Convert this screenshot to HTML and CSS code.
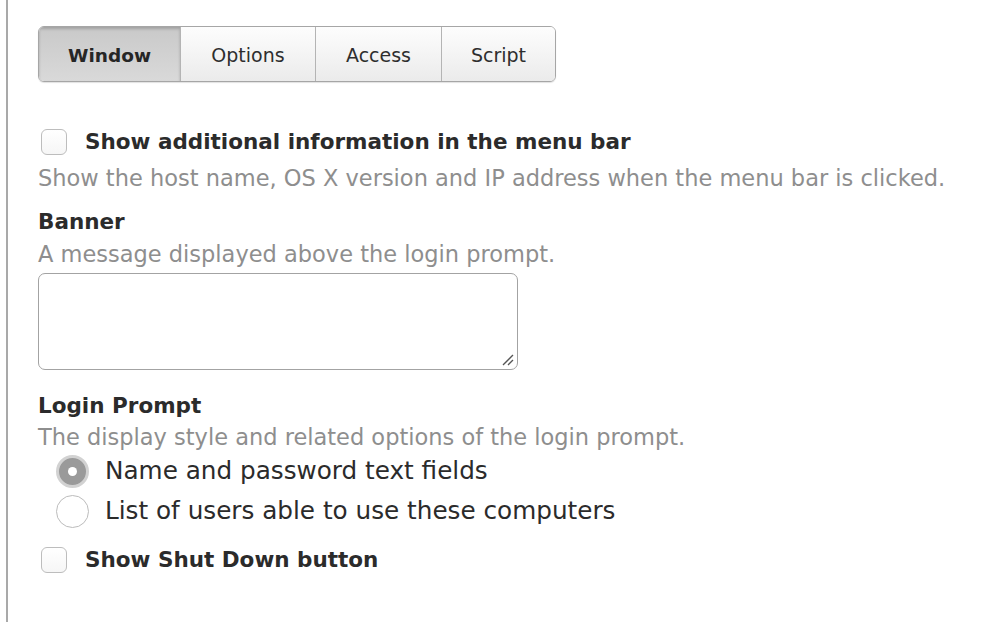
FILE: index.html
```html
<!DOCTYPE html>
<html>
<head>
<meta charset="utf-8">
<link rel="stylesheet" href="styles.css">
</head>
<body>
<div class="panel">
  <div class="content">
    <div class="segmented">
      <div class="seg seg-active">Window</div>
      <div class="seg seg-options">Options</div>
      <div class="seg seg-access">Access</div>
      <div class="seg seg-script">Script</div>
    </div>

    <div class="check-row first-check">
      <span class="checkbox"></span>
      <span class="check-label">Show additional information in the menu bar</span>
    </div>
    <div class="desc desc-menu">Show the host name, OS X version and IP address when the menu bar is clicked.</div>

    <div class="heading heading-banner">Banner</div>
    <div class="desc">A message displayed above the login prompt.</div>
    <div class="textarea">
      <svg class="grip" width="12" height="12" viewBox="0 0 12 12">
        <line x1="1" y1="11" x2="11" y2="1" stroke="#555" stroke-width="1.3"/>
        <line x1="6" y1="11" x2="11" y2="6" stroke="#555" stroke-width="1.3"/>
      </svg>
    </div>

    <div class="heading heading-login">Login Prompt</div>
    <div class="desc desc-login">The display style and related options of the login prompt.</div>
    <div class="radio-row">
      <span class="radio radio-on"><span class="dot"></span></span>
      <span class="radio-label">Name and password text fields</span>
    </div>
    <div class="radio-row">
      <span class="radio"></span>
      <span class="radio-label">List of users able to use these computers</span>
    </div>

    <div class="check-row last-check">
      <span class="checkbox"></span>
      <span class="check-label">Show Shut Down button</span>
    </div>
  </div>
</div>
</body>
</html>
```
FILE: styles.css
```css
html, body {
  margin: 0;
  padding: 0;
  background: #ffffff;
}
body {
  font-family: "DejaVu Sans", "Liberation Sans", sans-serif;
  color: #2b2b2b;
}
.panel {
  margin-left: 6px;
  border-left: 2px solid #a9a9a9;
  height: 622px;
  overflow: hidden;
}
.content {
  padding-left: 30px;
  padding-top: 26px;
  display: flex;
  flex-direction: column;
  align-items: flex-start;
}
.segmented {
  display: flex;
  height: 56px;
  box-sizing: border-box;
  border: 1px solid #a6a6a6;
  border-radius: 6px;
  overflow: hidden;
  box-shadow: 0 1px 1px rgba(0,0,0,0.12);
}
.seg {
  display: flex;
  align-items: center;
  justify-content: center;
  padding-top: 2px;
  font-size: 19px;
  color: #2e2e2e;
  background: linear-gradient(#fdfdfd, #ebebeb);
  border-left: 1px solid #b4b4b4;
}
.seg-active {
  width: 141px;
  border-left: none;
  font-size: 18.5px;
  font-weight: bold;
  color: #262626;
  background: linear-gradient(#c9c9c9, #d9d9d9);
  box-shadow: inset 0 2px 3px rgba(0,0,0,0.2);
}
.seg-options { width: 134px; }
.seg-access { width: 125px; }
.seg-script { width: 113px; }

.check-row {
  display: flex;
  align-items: center;
  height: 26px;
}
.first-check {
  margin-top: 47px;
}
.checkbox {
  width: 26px;
  height: 26px;
  box-sizing: border-box;
  border: 1px solid #bdbdbd;
  border-radius: 6px;
  background: linear-gradient(#ffffff, #f6f6f6);
  margin-left: 3px;
  margin-right: 18px;
}
.check-label {
  font-size: 21.5px;
  line-height: 26px;
  font-weight: bold;
  color: #2b2b2b;
}
.desc {
  font-size: 22.5px;
  line-height: 28px;
  color: #8e8e8e;
  margin-top: 5px;
}
.desc-menu {
  margin-top: 9px;
}
.heading {
  font-size: 21.5px;
  line-height: 26px;
  font-weight: bold;
  color: #2b2b2b;
}
.heading-banner {
  margin-top: 17px;
}
.textarea {
  position: relative;
  margin-top: 5px;
  width: 480px;
  height: 97px;
  box-sizing: border-box;
  border: 1px solid #a3a3a3;
  border-radius: 7px;
  background: #fff;
}
.grip {
  position: absolute;
  right: 3px;
  bottom: 3px;
}
.heading-login {
  margin-top: 23px;
}
.desc-login {
  margin-top: 4px;
}
.radio-row {
  display: flex;
  align-items: center;
  height: 40px;
}
.radio {
  width: 33px;
  height: 33px;
  box-sizing: border-box;
  border: 1px solid #bcbcbc;
  border-radius: 50%;
  background: #fff;
  margin-left: 18px;
  margin-right: 16px;
  display: flex;
  align-items: center;
  justify-content: center;
}
.radio-on {
  border: 3px solid #d2d2d2;
  background: #9a9a9a;
}
.dot {
  width: 9px;
  height: 9px;
  border-radius: 50%;
  background: #fff;
}
.radio-label {
  font-size: 24.7px;
  line-height: 30px;
  color: #2b2b2b;
}
.last-check {
  margin-top: 16px;
}
```
